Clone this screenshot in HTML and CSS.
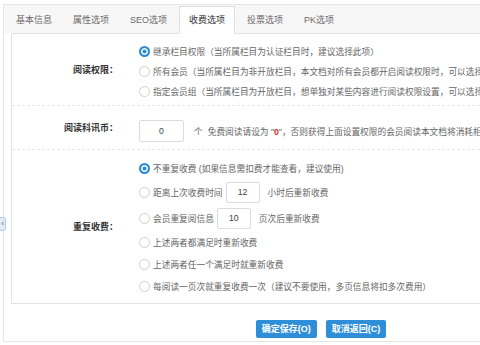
FILE: index.html
```
<!DOCTYPE html>
<html lang="zh-CN">
<head>
<meta charset="utf-8">
<title>收费选项</title>
<link rel="stylesheet" href="styles.css">
</head>
<body>
<div class="frame">
  <div class="tabs">
    <span class="tab">基本信息</span>
    <span class="tab">属性选项</span>
    <span class="tab">SEO选项</span>
    <span class="tab active">收费选项</span>
    <span class="tab">投票选项</span>
    <span class="tab">PK选项</span>
  </div>
  <div class="panel">
    <div class="row row-perm">
      <div class="label">阅读权限：</div>
      <div class="field">
        <div class="opt"><span class="radio on"></span>继承栏目权限（当所属栏目为认证栏目时，建议选择此项）</div>
        <div class="opt"><span class="radio"></span>所有会员（当所属栏目为非开放栏目，本文档对所有会员都开启阅读权限时，可以选择此项）</div>
        <div class="opt"><span class="radio"></span>指定会员组（当所属栏目为开放栏目，想单独对某些内容进行阅读权限设置，可以选择此项）</div>
      </div>
    </div>
    <div class="row row-coin">
      <div class="label">阅读科讯币：</div>
      <div class="field inline">
        <span class="input wide">0</span>
        <span class="unit">个</span>
        <span class="hint">免费阅读请设为 "<b class="red">0</b>"，否则获得上面设置权限的会员阅读本文档将消耗相应的科讯币</span>
      </div>
    </div>
    <div class="row row-repeat">
      <div class="label">重复收费：</div>
      <div class="field">
        <div class="opt"><span class="radio on"></span>不重复收费 (如果信息需扣费才能查看，建议使用)</div>
        <div class="opt tall"><span class="radio"></span>距离上次收费时间<span class="input small">12</span>小时后重新收费</div>
        <div class="opt tall"><span class="radio"></span>会员重复阅信息<span class="input small">10</span>页次后重新收费</div>
        <div class="opt"><span class="radio"></span>上述两者都满足时重新收费</div>
        <div class="opt"><span class="radio"></span>上述两者任一个满足时就重新收费</div>
        <div class="opt"><span class="radio"></span>每阅读一页次就重复收费一次（建议不要使用，多页信息将扣多次费用）</div>
      </div>
    </div>
  </div>
  <div class="actions">
    <span class="btn">确定保存(O)</span>
    <span class="btn">取消返回(C)</span>
  </div>
</div>
<span class="handle">‹</span>
</body>
</html>
```

FILE: styles.css
```
html, body {
  margin: 0;
  padding: 0;
  overflow: hidden;
  background: #fff;
}
body {
  font-family: "Liberation Sans", "Noto Sans CJK SC", sans-serif;
  font-size: 9px;
  color: #666;
  width: 480px;
  height: 345px;
  position: relative;
}
.frame {
  margin: 4px 0 0 3px;
  width: 636px;
  height: 338px;
  border: 1px solid #e6e6e6;
  box-sizing: border-box;
}
.tabs {
  display: flex;
  align-items: flex-end;
  gap: 3px;
  height: 28px;
  padding-left: 3px;
  background: #f7f7f7;
}
.tab {
  height: 26px;
  line-height: 26px;
  padding: 0 9px;
  color: #6a6a6a;
  white-space: nowrap;
}
.tab.active {
  position: relative;
  z-index: 1;
  background: #fff;
  color: #333;
  border: 1px solid #ddd;
  border-bottom-color: #fff;
  margin-bottom: -1px;
}
.panel {
  margin: 0 7px;
  border: 1px solid #e3e3e3;
}
.row {
  display: flex;
  align-items: center;
}
.row + .row {
  border-top: 1px dashed #e8e8e8;
}
.label {
  width: 106px;
  flex: none;
  text-align: right;
  padding-right: 3px;
  font-weight: bold;
  color: #333;
}
.field {
  padding-left: 17px;
  white-space: nowrap;
  font-size: 8.7px;
}
.row-perm .field {
  padding-top: 7px;
  padding-bottom: 4px;
}
.row-coin .field {
  padding-top: 14px;
  padding-bottom: 7px;
}
.row-repeat .field {
  padding-top: 7px;
  padding-bottom: 6px;
}
.opt {
  display: flex;
  align-items: center;
  height: 20px;
}
.row-repeat .opt {
  height: 22px;
}
.row-repeat .opt.tall {
  height: 26px;
}
.radio {
  width: 9px;
  height: 9px;
  border: 1px solid #cfcfcf;
  border-radius: 50%;
  background: #fff;
  margin-right: 3px;
  margin-left: 1px;
  flex: none;
}
.radio.on {
  width: 7px;
  height: 7px;
  border: 2px solid #2b8ad6;
  background: #2b8ad6;
  box-shadow: inset 0 0 0 1.5px #fff;
}
.inline {
  display: flex;
  align-items: center;
}
.input {
  display: inline-block;
  box-sizing: border-box;
  border: 1px solid #dcdcdc;
  border-radius: 2px;
  background: #fff;
  color: #444;
  text-align: center;
}
.input.wide {
  width: 45px;
  height: 22px;
  line-height: 20px;
  margin-left: 1px;
}
.input.small {
  width: 34px;
  height: 21px;
  line-height: 19px;
  margin: 0 8px 0 3px;
}
.unit {
  margin-left: 10px;
  margin-right: 5px;
  color: #666;
}
.red {
  color: #e02020;
}
.actions {
  display: flex;
  justify-content: center;
  gap: 9px;
  margin-top: 16px;
}
.btn {
  height: 18px;
  line-height: 18px;
  padding: 0 6px;
  background: #2e8fd8;
  color: #fff;
  font-weight: bold;
  border-radius: 2px;
}
.handle {
  position: absolute;
  left: 0;
  top: 217px;
  width: 5px;
  height: 12px;
  line-height: 12px;
  font-size: 8px;
  color: #2b6fb0;
  background: #e3ecf5;
  border: 1px solid #b7c9dc;
  border-left: none;
  border-radius: 0 3px 3px 0;
  text-align: center;
  overflow: hidden;
}
```
